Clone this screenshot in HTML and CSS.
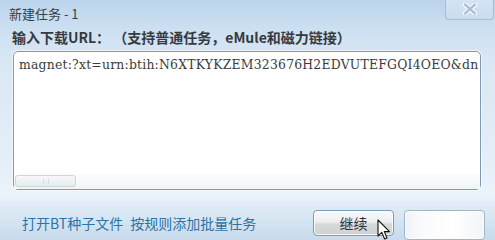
FILE: index.html
```html
<!DOCTYPE html>
<html lang="zh">
<head>
<meta charset="utf-8">
<link rel="stylesheet" href="styles.css">
</head>
<body>
<div class="dialog">
  <div class="titlebar">
    <span class="title">新建任务 - 1</span>
    <button class="close" aria-label="关闭">
      <svg width="16" height="12" viewBox="0 0 16 12">
        <path d="M3 1.5 L13 10.5 M13 1.5 L3 10.5" stroke="#ffffff" stroke-width="4.5" stroke-linecap="round"/>
        <path d="M3 1.5 L13 10.5 M13 1.5 L3 10.5" stroke="#a9c0d6" stroke-width="2.4" stroke-linecap="round"/>
      </svg>
    </button>
  </div>
  <div class="label">输入下载URL： （支持普通任务，eMule和磁力链接）</div>
  <div class="urlbox">
    <div class="urltext">magnet:?xt=urn:btih:N6XTKYKZEM323676H2EDVUTEFGQI4OEO&amp;dn</div>
    <div class="hscroll"><div class="thumb"><span class="grip"></span></div></div>
  </div>
  <div class="footer">
    <div class="links">
      <a class="link">打开BT种子文件</a>
      <a class="link">按规则添加批量任务</a>
    </div>
    <div class="buttons">
      <button class="btn primary">继续</button>
      <button class="btn ghost"></button>
    </div>
  </div>
  <svg class="cursor" width="14" height="22" viewBox="0 0 14 22">
    <path d="M1 1 L1 17 L4.8 13.4 L7.6 20 L10 19 L7.3 12.6 L12.5 12.6 Z" fill="#ffffff" stroke="#111" stroke-width="1.1" stroke-linejoin="round"/>
  </svg>
</div>
</body>
</html>
```
FILE: styles.css
```css
* { box-sizing: border-box; }
html, body { margin: 0; padding: 0; }
body { width: 495px; height: 240px; overflow: hidden; }
.dialog {
  position: relative;
  width: 495px;
  height: 240px;
  display: flex;
  flex-direction: column;
  font-family: "Noto Sans CJK SC", "Noto Sans", sans-serif;
  background: linear-gradient(180deg, #bbd4ec 0px, #cde0f2 30px, #d9e7f4 60px, #e2edf7 150px, #ebf3fa 195px, #e0ecf6 204px, #d3e4f1 222px, #c8dbec 240px);
}
.titlebar {
  height: 27px;
  display: flex;
  align-items: flex-start;
  justify-content: space-between;
}
.title {
  margin: 5px 0 0 9px;
  font-size: 13px;
  line-height: 18px;
  color: #3a3f44;
}
.close {
  width: 49px;
  height: 21px;
  margin: -1px 1px 0 0;
  padding: 0;
  border: 1px solid #a6bdd3;
  border-top: none;
  border-radius: 0 0 4px 4px;
  background: linear-gradient(180deg, #d4e4f3, #c9dcee);
  display: flex;
  align-items: center;
  justify-content: center;
}
.label {
  margin: 0 0 0 12px;
  height: 24px;
  font-size: 14px;
  line-height: 20px;
  font-weight: 700;
  color: #353a3f;
  white-space: nowrap;
}
.urlbox {
  margin-left: 13px;
  width: 468px;
  height: 140px;
  border: 1px solid #8199b0;
  border-radius: 5px;
  background: #ffffff;
  display: flex;
  flex-direction: column;
  justify-content: space-between;
  box-shadow: 0 0 0 1px rgba(255,255,255,0.6);
}
.urltext {
  padding: 5px 0 0 5px;
  font-family: "DejaVu Serif", serif;
  font-size: 12.4px;
  line-height: 16px;
  letter-spacing: 0.22px;
  color: #3b3b3b;
  white-space: nowrap;
}
.hscroll {
  height: 15px;
  padding: 1px 0 2px 1px;
  background: linear-gradient(180deg, #fbfcfd, #f1f4f7);
}
.thumb {
  width: 61px;
  height: 12px;
  border: 1px solid #cdd6de;
  border-radius: 3px;
  background: linear-gradient(180deg, #f6f8fa, #e6ebef);
  display: flex;
  align-items: center;
  justify-content: center;
}
.grip { width: 6px; height: 5px; border-left: 1px solid #d4dbe1; border-right: 1px solid #d4dbe1; }
.footer {
  margin-top: 20px;
  flex: 1;
  display: flex;
  align-items: flex-start;
  justify-content: space-between;
}
.links {
  margin: 3px 0 0 22px;
  display: flex;
  gap: 7px;
  font-size: 14px;
  line-height: 20px;
  color: #2f72a6;
}
.link { cursor: pointer; }
.buttons {
  display: flex;
  gap: 10px;
  margin-right: 10px;
}
.btn {
  width: 81px;
  height: 26px;
  border: 1px solid #7d9cb6;
  border-radius: 4px;
  font-family: "Noto Sans CJK SC", sans-serif;
  font-size: 14px;
  color: #333;
  padding: 0;
  background: linear-gradient(180deg, #f8f9fa 0%, #eceeef 45%, #d6d8d9 55%, #cfd2d3 100%);
  box-shadow: inset 0 0 0 1px rgba(255,255,255,0.8);
}
.ghost {
  height: 30px;
  border-color: #9fb6ca;
  background: linear-gradient(90deg, #eef3f8 0%, #f9fafb 20%, #ffffff 60%, #f2f4f6 100%);
}
.cursor { position: absolute; left: 377px; top: 219px; }
```
